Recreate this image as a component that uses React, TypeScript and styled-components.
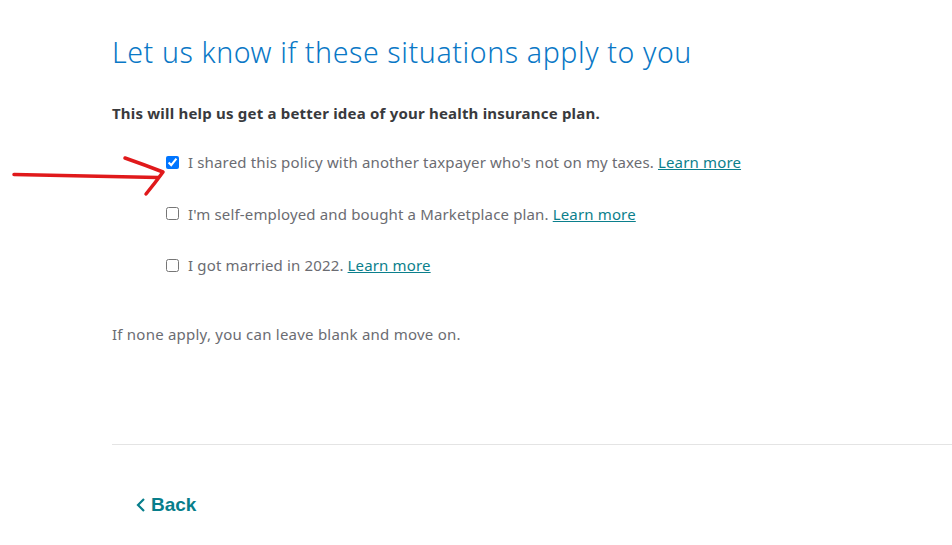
import React from 'react';
import styled, { createGlobalStyle } from 'styled-components';

const GlobalStyle = createGlobalStyle`
  html, body {
    margin: 0;
    padding: 0;
    background: #fff;
  }
  body {
    font-family: 'Noto Sans', 'Liberation Sans', sans-serif;
    overflow: hidden;
  }
`;

const Page = styled.div`
  position: relative;
  width: 952px;
  height: 545px;
  padding-left: 112px;
  box-sizing: border-box;
  overflow: hidden;
`;

const Title = styled.h1`
  margin: 0;
  padding-top: 33px;
  font-size: 28.5px;
  font-weight: 300;
  line-height: 38px;
  color: #0a78c6;
  letter-spacing: 0.6px;
`;

const Subtitle = styled.p`
  margin: 32px 0 0;
  font-size: 15px;
  font-weight: 700;
  line-height: 20px;
  color: #393a3d;
  letter-spacing: 0.2px;
`;

const Options = styled.div`
  display: flex;
  flex-direction: column;
  gap: 31.5px;
  margin-top: 29px;
  padding-left: 54px;
`;

const Option = styled.label`
  display: flex;
  align-items: center;
  gap: 9px;
  font-size: 15px;
  line-height: 20px;
  color: #6b6c72;
  letter-spacing: 0.15px;
`;

const Box = styled.input`
  margin: 0;
  width: 13px;
  height: 13px;
  accent-color: #0075ff;
`;

const Link = styled.a`
  color: #0b7f8c;
  text-decoration: underline;
  margin-left: 4px;
  cursor: pointer;
`;

const Note = styled.p`
  margin: 49px 0 0;
  font-size: 15px;
  line-height: 20px;
  color: #6b6c72;
  letter-spacing: 0.23px;
`;

const Divider = styled.hr`
  margin: 100px 0 0;
  border: 0;
  border-top: 1px solid #e4e4e4;
`;

const BackButton = styled.button`
  display: flex;
  align-items: center;
  gap: 5px;
  margin: 49px 0 0 24px;
  padding: 0;
  border: 0;
  background: none;
  font-family: 'Liberation Sans', Arial, sans-serif;
  font-size: 19px;
  font-weight: 700;
  color: #077e8b;
  cursor: pointer;
`;

const Annotation = styled.svg`
  position: absolute;
  left: 0;
  top: 150px;
  pointer-events: none;
`;

const options = [
  { text: "I shared this policy with another taxpayer who's not on my taxes.", checked: true },
  { text: "I'm self-employed and bought a Marketplace plan.", checked: false },
  { text: 'I got married in 2022.', checked: false },
];

export default function App() {
  return (
    <Page>
      <GlobalStyle />
      <Title>Let us know if these situations apply to you</Title>
      <Subtitle>This will help us get a better idea of your health insurance plan.</Subtitle>
      <Options>
        {options.map((o) => (
          <Option key={o.text}>
            <Box type="checkbox" defaultChecked={o.checked} />
            <span>
              {o.text}
              <Link>Learn more</Link>
            </span>
          </Option>
        ))}
      </Options>
      <Note>If none apply, you can leave blank and move on.</Note>
      <Divider />
      <BackButton>
        <svg width="10" height="16" viewBox="0 0 10 16">
          <path d="M8 2 L2 8 L8 14" fill="none" stroke="#077e8b" strokeWidth="2.2" />
        </svg>
        Back
      </BackButton>
      <Annotation width="180" height="50" viewBox="0 150 180 50">
        <path
          d="M14 174.5 L158 177.5"
          fill="none"
          stroke="#e0191b"
          strokeWidth="3.5"
          strokeLinecap="round"
        />
        <path
          d="M125 158 Q145 165 163 172 Q155 183 146 194"
          fill="none"
          stroke="#e0191b"
          strokeWidth="3.5"
          strokeLinecap="round"
          strokeLinejoin="round"
        />
      </Annotation>
    </Page>
  );
}
